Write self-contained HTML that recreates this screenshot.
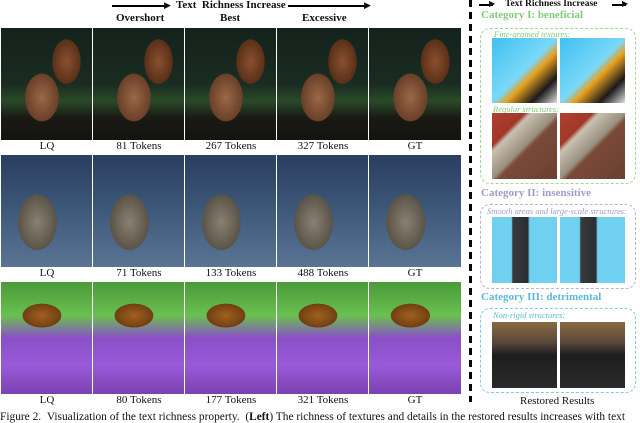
<!DOCTYPE html>
<html><head><style>
body{margin:0;width:640px;height:422px;background:#fff;position:relative;overflow:hidden;font-family:"Liberation Serif",serif;color:#111}
.a{position:absolute}
.lbl{position:absolute;font-size:11px;width:92px;text-align:center}
.sq{background:radial-gradient(ellipse 22% 28% at 72% 30%,#8a5030,#5a3018 70%,transparent 72%),radial-gradient(ellipse 26% 30% at 45% 62%,#9a6848,#6a4028 70%,transparent 72%),linear-gradient(180deg,#14221c 0%,#1a2c22 50%,#2a4a28 65%,#1a1a14 80%,#15130f 100%)}
.bd{background:radial-gradient(ellipse 30% 35% at 40% 60%,#8a8070,#5a5448 70%,transparent 72%),linear-gradient(180deg,#2a3e60 0%,#3c5678 45%,#5a7494 100%)}
.be{background:radial-gradient(ellipse 30% 15% at 45% 30%,#a06020,#704010 70%,transparent 72%),linear-gradient(180deg,#4a9a3a 0%,#6ac050 30%,#8a50c8 50%,#9a5ad8 75%,#7a40b0 100%)}
.tex{background:linear-gradient(135deg,#40c0f0 0%,#7ad8f8 50%,#e8a020 60%,#1a1a1a 80%,#e0e0e0 100%)}
.brk{background:linear-gradient(135deg,#b04030 0%,#a03828 25%,#c8c0b0 30%,#9a9080 50%,#7a4a38 55%,#6a4030 100%)}
.sky{background:linear-gradient(90deg,#70d0f0 0%,#70d0f0 30%,#3a3a3a 32%,#2a2e34 55%,#70d0f0 58%,#70d0f0 100%)}
.ppl{background:linear-gradient(180deg,#8a6a40 0%,#5a4a3a 30%,#1e1e1e 50%,#2a2a2a 100%)}
.box{position:absolute;border:1.5px dashed;border-radius:10px;box-sizing:border-box}
.sub{position:absolute;font-size:8.5px;font-style:italic}
</style></head><body>
<div class="a" style="left:112px;top:5px;width:56px;height:1.5px;background:#000"></div>
<div class="a" style="left:164px;top:0px;font-size:9px">▶</div>
<div class="a" style="left:176px;top:-1px;font-size:11px;font-weight:bold;white-space:nowrap">Text&nbsp; Richness Increase</div>
<div class="a" style="left:288px;top:5px;width:78px;height:1.5px;background:#000"></div>
<div class="a" style="left:364px;top:0px;font-size:9px">▶</div>
<div class="a" style="left:116px;top:12px;font-size:11px;font-weight:bold">Overshort</div>
<div class="a" style="left:220px;top:12px;font-size:11px;font-weight:bold">Best</div>
<div class="a" style="left:302px;top:12px;font-size:11px;font-weight:bold">Excessive</div>

<div class="a sq" style="left:1px;top:28px;width:91px;height:112px"></div>
<div class="a sq" style="left:93px;top:28px;width:91px;height:112px"></div>
<div class="a sq" style="left:185px;top:28px;width:91px;height:112px"></div>
<div class="a sq" style="left:277px;top:28px;width:91px;height:112px"></div>
<div class="a sq" style="left:369px;top:28px;width:92px;height:112px"></div>
<div class="lbl" style="left:1px;top:140px">LQ</div><div class="lbl" style="left:93px;top:140px">81 Tokens</div><div class="lbl" style="left:185px;top:140px">267 Tokens</div><div class="lbl" style="left:277px;top:140px">327 Tokens</div><div class="lbl" style="left:369px;top:140px">GT</div>

<div class="a bd" style="left:1px;top:155px;width:91px;height:112px"></div>
<div class="a bd" style="left:93px;top:155px;width:91px;height:112px"></div>
<div class="a bd" style="left:185px;top:155px;width:91px;height:112px"></div>
<div class="a bd" style="left:277px;top:155px;width:91px;height:112px"></div>
<div class="a bd" style="left:369px;top:155px;width:92px;height:112px"></div>
<div class="lbl" style="left:1px;top:267px">LQ</div><div class="lbl" style="left:93px;top:267px">71 Tokens</div><div class="lbl" style="left:185px;top:267px">133 Tokens</div><div class="lbl" style="left:277px;top:267px">488 Tokens</div><div class="lbl" style="left:369px;top:267px">GT</div>

<div class="a be" style="left:1px;top:282px;width:91px;height:112px"></div>
<div class="a be" style="left:93px;top:282px;width:91px;height:112px"></div>
<div class="a be" style="left:185px;top:282px;width:91px;height:112px"></div>
<div class="a be" style="left:277px;top:282px;width:91px;height:112px"></div>
<div class="a be" style="left:369px;top:282px;width:92px;height:112px"></div>
<div class="lbl" style="left:1px;top:394px">LQ</div><div class="lbl" style="left:93px;top:394px">80 Tokens</div><div class="lbl" style="left:185px;top:394px">177 Tokens</div><div class="lbl" style="left:277px;top:394px">321 Tokens</div><div class="lbl" style="left:369px;top:394px">GT</div>

<div class="a" style="left:0;top:411px;font-size:11.4px;white-space:nowrap">Figure 2. &nbsp;Visualization of the text richness property. &nbsp;(<b>Left</b>) The richness of textures and details in the restored results increases with text</div>

<div class="a" style="left:469px;top:0;width:3px;height:402px;background:repeating-linear-gradient(180deg,#000 0 7px,transparent 7px 12px)"></div>

<div class="a" style="left:479px;top:4px;width:14px;height:1.5px;background:#000"></div>
<div class="a" style="left:489px;top:-1px;font-size:8px">▶</div>
<div class="a" style="left:505px;top:-1px;font-size:9.5px;font-weight:bold;white-space:nowrap">Text Richness Increase</div>
<div class="a" style="left:612px;top:4px;width:14px;height:1.5px;background:#000"></div>
<div class="a" style="left:622px;top:-1px;font-size:8px">▶</div>

<div class="a" style="left:481px;top:9px;font-size:11px;font-weight:bold;color:#7fcc78">Category I: beneficial</div>
<div class="box" style="left:480px;top:28px;width:156px;height:156px;border-color:#a0d898"></div>
<div class="sub" style="left:494px;top:29px;color:#7fcc78">Fine-grained textures:</div>
<div class="a tex" style="left:492px;top:38px;width:65px;height:65px"></div>
<div class="a tex" style="left:560px;top:38px;width:65px;height:65px"></div>
<div class="sub" style="left:493px;top:104px;color:#7fcc78">Regular structures:</div>
<div class="a brk" style="left:492px;top:113px;width:65px;height:66px"></div>
<div class="a brk" style="left:560px;top:113px;width:65px;height:66px"></div>

<div class="a" style="left:481px;top:187px;font-size:11px;font-weight:bold;color:#a09ad0">Category II: insensitive</div>
<div class="box" style="left:480px;top:204px;width:156px;height:85px;border-color:#b8b2dc"></div>
<div class="sub" style="left:487px;top:206px;color:#a09ad0">Smooth areas and large-scale structures:</div>
<div class="a sky" style="left:492px;top:217px;width:65px;height:66px"></div>
<div class="a sky" style="left:560px;top:217px;width:65px;height:66px"></div>

<div class="a" style="left:481px;top:291px;font-size:11px;font-weight:bold;color:#5cb8d8">Category III: detrimental</div>
<div class="box" style="left:480px;top:308px;width:156px;height:85px;border-color:#80cce4"></div>
<div class="sub" style="left:493px;top:310px;color:#5cb8d8">Non-rigid structures:</div>
<div class="a ppl" style="left:492px;top:322px;width:65px;height:66px"></div>
<div class="a ppl" style="left:560px;top:322px;width:65px;height:66px"></div>

<div class="a" style="left:520px;top:395px;font-size:11px">Restored Results</div>
</body></html>
